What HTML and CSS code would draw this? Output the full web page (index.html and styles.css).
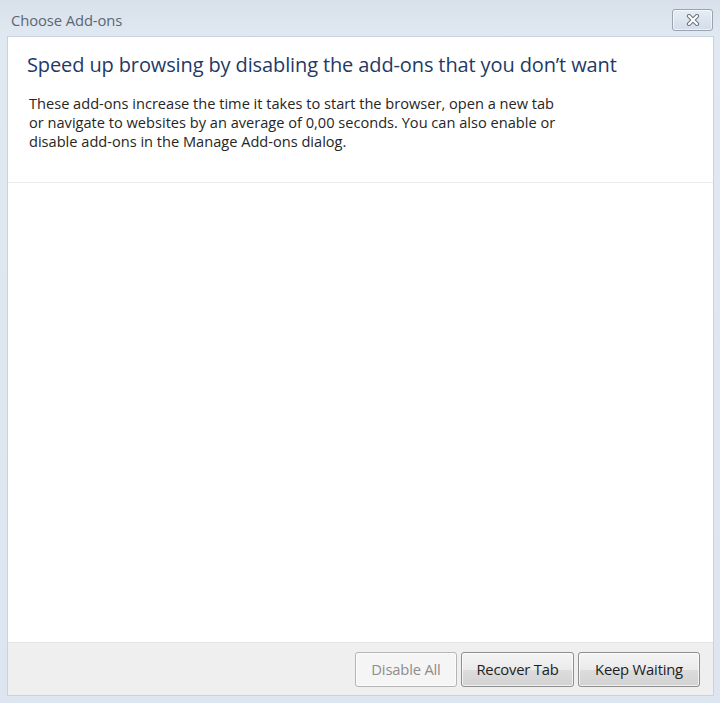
FILE: index.html
```html
<!DOCTYPE html>
<html lang="en">
<head>
<meta charset="utf-8">
<title>Choose Add-ons</title>
<link rel="stylesheet" href="styles.css">
</head>
<body>
<div class="window">
  <div class="titlebar">
    <span class="title">Choose Add-ons</span>
    <button class="close" aria-label="Close">
      <svg width="14" height="12" viewBox="0 0 14 12">
        <path d="M3 2 L11 10 M11 2 L3 10" stroke="#6b7480" stroke-width="4.2" stroke-linecap="round" fill="none"/>
        <path d="M3 2 L11 10 M11 2 L3 10" stroke="#ffffff" stroke-width="2.2" stroke-linecap="round" fill="none"/>
      </svg>
    </button>
  </div>
  <div class="client">
    <div class="header">
      <h1 class="heading">Speed up browsing by disabling the add-ons that you don’t want</h1>
      <p class="desc">These add-ons increase the time it takes to start the browser, open a new tab<br>or navigate to websites by an average of 0,00 seconds. You can also enable or<br>disable add-ons in the Manage Add-ons dialog.</p>
    </div>
    <div class="list"></div>
    <div class="footer">
      <button class="btn btn-disabled" disabled>Disable All</button>
      <button class="btn">Recover Tab</button>
      <button class="btn">Keep Waiting</button>
    </div>
  </div>
</div>
</body>
</html>
```

FILE: styles.css
```css
html, body {
  margin: 0;
  padding: 0;
}
body {
  width: 720px;
  height: 703px;
  background: #dde6f0;
  font-family: "Open Sans", "Noto Sans", "Liberation Sans", sans-serif;
  overflow: hidden;
}
.window {
  width: 720px;
  height: 703px;
  display: flex;
  flex-direction: column;
  background: linear-gradient(180deg, #d8e1eb 0px, #e0e8f1 36px, #dde6f0 100%);
}
.titlebar {
  height: 37px;
  flex: none;
  display: flex;
  align-items: flex-start;
  justify-content: space-between;
  box-sizing: border-box;
  padding: 10px 7px 0 11px;
}
.title {
  font-size: 14.8px;
  line-height: 20px;
  color: #5b6673;
  letter-spacing: -0.1px;
}
.close {
  margin-top: -1px;
  width: 41px;
  height: 22px;
  padding: 0;
  border: 1px solid #98a4b2;
  border-radius: 3px;
  background: linear-gradient(180deg, #e6edf4 0%, #d3dde8 100%);
  box-shadow: inset 0 0 0 1px rgba(255,255,255,0.6);
  display: flex;
  align-items: center;
  justify-content: center;
}
.client {
  flex: 1;
  margin: 0 7px 8px 8px;
  background: #ffffff;
  display: flex;
  flex-direction: column;
  box-shadow: 0 0 0 1px #c9d3de;
}
.header {
  padding: 15px 12px 31px 19px;
  border-bottom: 1px solid #ececec;
}
.heading {
  margin: 0;
  font-weight: normal;
  font-size: 20px;
  line-height: 26px;
  color: #1f3a66;
  letter-spacing: -0.12px;
  white-space: nowrap;
}
.desc {
  margin: 16px 0 0 2px;
  font-size: 14.6px;
  line-height: 19px;
  color: #262626;
  letter-spacing: 0;
  white-space: nowrap;
}
.list {
  flex: 1;
}
.footer {
  height: 53px;
  flex: none;
  box-sizing: border-box;
  background: #efefef;
  border-top: 1px solid #e4e4e4;
  display: flex;
  align-items: center;
  justify-content: flex-end;
  gap: 4px;
  padding: 0 13px 0 0;
}
.btn {
  height: 35px;
  box-sizing: border-box;
  padding: 0;
  font-family: "Open Sans", "Noto Sans", "Liberation Sans", sans-serif;
  font-size: 14.8px;
  letter-spacing: -0.2px;
  color: #1e1e1e;
  border: 1px solid #8e8e8e;
  border-radius: 3px;
  background: linear-gradient(180deg, #f4f4f4 0%, #ebebeb 50%, #dddddd 51%, #d2d2d2 100%);
  box-shadow: inset 0 0 0 1px rgba(255,255,255,0.7);
}
.btn:nth-child(2) { width: 113px; }
.btn:nth-child(3) { width: 122px; }
.btn-disabled {
  width: 102px;
  color: #8d8d8d;
  border-color: #b5b5b5;
  background: #f5f5f5;
}
```
